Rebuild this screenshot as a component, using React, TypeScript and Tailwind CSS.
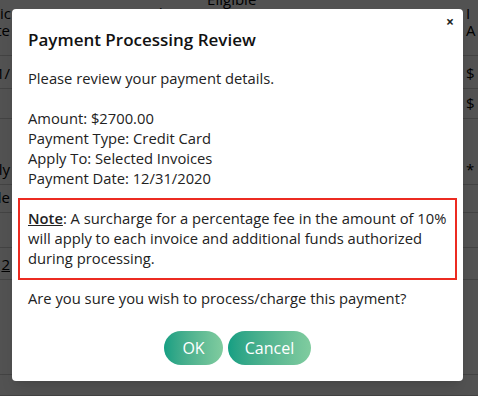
import React from 'react';

const rows = [
    { h: 'h-[56px]', left: ['Invoic', 'Date'], right: ['I', 'A'], header: true },
    { h: 'h-[33px]', left: ['01/'], right: ['$'] },
    { h: 'h-[30px]', left: [''], right: ['$'] },
    { h: 'h-[66px]', left: ['', 'Apply'], right: ['', '*'] },
    { h: 'h-[28px]', left: ['Sele'], right: [''] },
    { h: 'h-[35px]', left: [''], right: [''] },
    { h: 'h-[32px]', left: ['2'], right: [''], underline: true },
    { h: 'h-[95px]', left: [''], right: [''] },
    { h: 'h-[21px]', left: [''], right: [''] },
];

const Background: React.FC = () => (
    <div className="bg-white">
        {rows.map((row, i) => (
            <div
                key={i}
                className={`${row.h} flex ${row.header ? 'items-start pt-[5px]' : 'items-end pb-[6px]'} justify-between border-b border-[#cfcfcf] overflow-hidden`}
            >
                <div className={`-ml-[30px] text-[15px] leading-[17px] text-black ${row.underline ? 'underline' : ''}`}>
                    {row.left.map((t, j) => (
                        <div key={j} className="text-right w-[40px]">{t}</div>
                    ))}
                </div>
                {row.header && (
                    <div className="flex gap-[36px] -mt-[14px] ml-[125px] text-[15px] leading-[17px] text-black">
                        <span className="mt-[14px]">Code</span>
                        <span>Eligible</span>
                    </div>
                )}
                <div className="flex-1" />
                <div className="pr-[2px] text-[15px] leading-[17px] text-black w-[12px]">
                    {row.right.map((t, j) => (
                        <div key={j}>{t}</div>
                    ))}
                </div>
            </div>
        ))}
    </div>
);

const App: React.FC = () => {
    return (
        <div className="relative w-[478px] h-[396px] overflow-hidden font-['Open_Sans','Liberation_Sans',sans-serif]">
            <Background />
            <div className="absolute inset-0 bg-black/[0.68]" />

            {/* 모달 */}
            <div className="absolute left-[12px] top-[9px] w-[451px] h-[372px] bg-white rounded-[4px] shadow-lg text-[#222] text-[14.75px] leading-[20px]">
                <button className="absolute right-[9px] top-[3px] text-[14px] font-bold leading-[20px] text-[#222]">×</button>
                <div className="px-[16px] pt-[19px]">
                    <h2 className="text-[17px] leading-[24px] font-semibold text-[#111]">Payment Processing Review</h2>
                    <p className="mt-[16px]">Please review your payment details.</p>
                    <div className="mt-[20px]">
                        <p>Amount: $2700.00</p>
                        <p>Payment Type: Credit Card</p>
                        <p>Apply To: Selected Invoices</p>
                        <p>Payment Date: 12/31/2020</p>
                    </div>
                </div>
                <div className="mx-[6px] mt-[10px] border-2 border-[#ec2b21] px-[8px] pt-[8px] pb-[10px]">
                    <p>
                        <span className="font-semibold underline">Note</span>: A surcharge for a percentage fee in the amount of 10% will apply to each invoice and additional funds authorized during processing.
                    </p>
                </div>
                <p className="px-[16px] mt-[8px]">Are you sure you wish to process/charge this payment?</p>
                <div className="mt-[23px] flex justify-center gap-[5px]">
                    <button className="h-[34px] w-[59px] rounded-full bg-gradient-to-r from-[#129f83] to-[#80cc9f] text-white text-[16px]">OK</button>
                    <button className="h-[34px] w-[83px] rounded-full bg-gradient-to-r from-[#129f83] to-[#80cc9f] text-white text-[16px]">Cancel</button>
                </div>
            </div>
        </div>
    );
};

export default App;
